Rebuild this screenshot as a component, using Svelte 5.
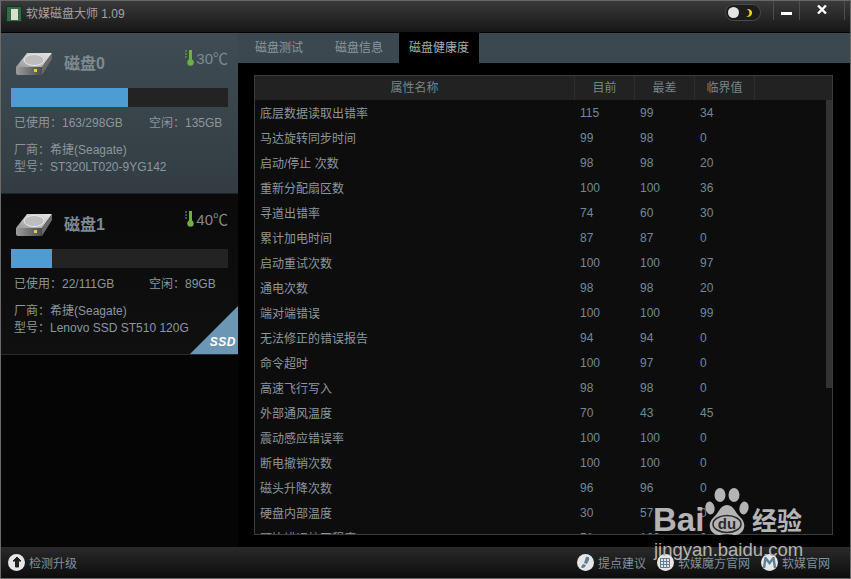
<script>
    const disks = [
        { name: '磁盘0', temp: '30℃', pct: 54, used: '163/298GB', free: '135GB', model: 'ST320LT020-9YG142', active: true },
        { name: '磁盘1', temp: '40℃', pct: 19, used: '22/111GB', free: '89GB', model: 'Lenovo SSD ST510 120G', ssd: true }
    ];

    const tabs = ['磁盘测试', '磁盘信息', '磁盘健康度'];

    const rows = [
        ['底层数据读取出错率', 115, 99, 34],
        ['马达旋转同步时间', 99, 98, 0],
        ['启动/停止 次数', 98, 98, 20],
        ['重新分配扇区数', 100, 100, 36],
        ['寻道出错率', 74, 60, 30],
        ['累计加电时间', 87, 87, 0],
        ['启动重试次数', 100, 100, 97],
        ['通电次数', 98, 98, 20],
        ['端对端错误', 100, 100, 99],
        ['无法修正的错误报告', 94, 94, 0],
        ['命令超时', 100, 97, 0],
        ['高速飞行写入', 98, 98, 0],
        ['外部通风温度', 70, 43, 45],
        ['震动感应错误率', 100, 100, 0],
        ['断电撤销次数', 100, 100, 0],
        ['磁头升降次数', 96, 96, 0],
        ['硬盘内部温度', 30, 57, 0],
        ['预比错误校正程度', 51, 100, 0]
    ];
</script>

<div class="window">
    <header class="titlebar">
        <div class="logo"><span></span></div>
        <div class="title">软媒磁盘大师 1.09</div>
        <div class="theme">
            <span class="knob"></span>
            <svg width="8" height="10" viewBox="0 0 10 12"><path d="M2 1 C7 0 10 4 8.500 7.500 C7.500 10 4.500 11.500 1.500 10.500 C4.500 10 5.500 8 5.500 6 C5.500 4 4.500 2 2 1Z" fill="#f2cf1c" /></svg>
        </div>
        <div class="winbtn"><span class="minus"></span></div>
        <div class="winbtn close">
            <svg width="10" height="9" viewBox="0 0 10 9"><path d="M1 0.500 L9 8.500 M9 0.500 L1 8.500" stroke="#fff" stroke-width="2.400" /></svg>
        </div>
    </header>

    <div class="body">
        <aside class="sidebar">
            {#each disks as disk}
                <section class="disk" class:active={disk.active}>
                    <div class="disk-head">
                        <svg class="hdd" width="38" height="23" viewBox="0 0 38 23">
                            <defs>
                                <linearGradient id="hddtop" x1="0" y1="1" x2="1" y2="0">
                                    <stop offset="0" stop-color="#9a9a9a" />
                                    <stop offset="1" stop-color="#e8e8e8" />
                                </linearGradient>
                                <linearGradient id="hddfront" x1="0" y1="0" x2="1" y2="0">
                                    <stop offset="0" stop-color="#9c9c9c" />
                                    <stop offset="1" stop-color="#4c4c4c" />
                                </linearGradient>
                            </defs>
                            <path d="M12 0 L37 0 L27 14 L1 14Z" fill="url(#hddtop)" />
                            <ellipse cx="19" cy="7" rx="10" ry="5.500" fill="#bdbdbd" stroke="#e6e6e6" />
                            <path d="M1 14 L27 14 L27 22 L3 22 Q1 22 1 20Z" fill="url(#hddfront)" />
                            <path d="M27 14 L37 0 L37 6 L27 22Z" fill="#6a6a6a" />
                            <rect x="19" y="16" width="3" height="3" fill="#d8cf4a" />
                        </svg>
                        <h2>{disk.name}</h2>
                        <div class="temp">
                            <svg width="10" height="16" viewBox="0 0 10 16">
                                <rect x="4" y="0" width="3" height="11" fill="#6fb043" />
                                <circle cx="5.500" cy="12.500" r="3.200" fill="#6fb043" />
                                <path d="M0 1h2M0 4h2M0 7h2" stroke="#6fb043" />
                            </svg>
                            <span>{disk.temp}</span>
                        </div>
                    </div>
                    <div class="bar"><div class="fill" style="width:{disk.pct}%"></div></div>
                    <div class="usage">
                        <span class="used">已使用：{disk.used}</span>
                        <span>空闲：{disk.free}</span>
                    </div>
                    <div class="vendor">厂商：希捷(Seagate)</div>
                    <div class="vendor">型号：{disk.model}</div>
                    {#if disk.ssd}
                        <div class="ssd"><span>SSD</span></div>
                    {/if}
                </section>
            {/each}
        </aside>

        <main class="main">
            <nav class="tabs">
                {#each tabs as tab, i}
                    <div class="tab" class:current={i === 2}>{tab}</div>
                {/each}
            </nav>
            <div class="table">
                <div class="thead">
                    <div class="cell name">属性名称</div>
                    <div class="cell num">目前</div>
                    <div class="cell num">最差</div>
                    <div class="cell num">临界值</div>
                </div>
                <div class="tbody">
                    {#each rows as row}
                        <div class="row">
                            <div class="col-name">{row[0]}</div>
                            <div class="col-num">{row[1]}</div>
                            <div class="col-num">{row[2]}</div>
                            <div class="col-num">{row[3]}</div>
                        </div>
                    {/each}
                    <div class="scrollbar"></div>
                </div>
            </div>
        </main>
    </div>

    <footer class="footer">
        <div class="link">
            <span class="round">
                <svg width="12" height="13" viewBox="0 0 12 13"><path d="M6 1 L10 5 L7.500 5 L7.500 11 L4.500 11 L4.500 5 L2 5Z" fill="#222" stroke="#222" /></svg>
            </span>
            检测升级
        </div>
        <div class="spacer"></div>
        <div class="link">
            <span class="round">
                <svg width="12" height="14" viewBox="0 0 12 14"><path d="M7 1 Q11 0 10 4 L8 8 L5 7Z M4 8 L7 9 L6 11 Q3 13 2 11Z" fill="#5d7f98" /></svg>
            </span>
            提点建议
        </div>
        <div class="link">
            <span class="round">
                <svg width="12" height="12" viewBox="0 0 12 12"><path d="M1.500 1.500h9v9h-9z M4.500 1.500v9 M7.500 1.500v9 M1.500 4.500h9 M1.500 7.500h9" fill="none" stroke="#5d7f98" /></svg>
            </span>
            软媒魔方官网
        </div>
        <div class="link">
            <span class="round">
                <svg width="13" height="12" viewBox="0 0 13 12"><path d="M1 11 L2.500 1 L6.500 6 L10.500 1 L12 11" fill="none" stroke="#5d7f98" stroke-width="2.400" /></svg>
            </span>
            软媒官网
        </div>
    </footer>

    <div class="watermark">
        <div class="wm-top">
            <span class="wm-bai">Bai</span>
            <svg class="paw" width="44" height="48" viewBox="0 0 44 48">
                <ellipse cx="5" cy="20" rx="4.500" ry="6.500" transform="rotate(-12 5 20)" />
                <ellipse cx="15" cy="7" rx="5.500" ry="7" />
                <ellipse cx="29" cy="7" rx="5.500" ry="7" />
                <ellipse cx="39" cy="20" rx="4.500" ry="6.500" transform="rotate(12 39 20)" />
                <path d="M22 17 C29 17 30 25 36 30 C43 37 38 48 29 47 Q22 45 15 47 C6 48 1 37 8 30 C14 25 15 17 22 17Z" />
                <ellipse cx="22" cy="36" rx="14" ry="8.500" fill="none" stroke="#2b2b2b" stroke-width="1.500" />
                <text x="22" y="41" text-anchor="middle" class="paw-text">du</text>
            </svg>
            <span class="wm-jy">经验</span>
        </div>
        <div class="wm-url">jingyan.baidu.com</div>
    </div>
</div>

<style>
    :global(body) {
        margin: 0;
        background: #000;
    }

    .window {
        position: relative;
        width: 851px;
        height: 579px;
        box-sizing: border-box;
        display: flex;
        flex-direction: column;
        overflow: hidden;
        background: #000;
        border-left: 1px solid #6a6a6a;
        border-right: 1px solid #6a6a6a;
        border-bottom: 1px solid #6a6a6a;
        font-family: "Liberation Sans", "Noto Sans CJK SC", sans-serif;
        font-size: 12px;
        color: #8f9ca3;
    }

    .titlebar {
        height: 32px;
        flex: none;
        display: flex;
        align-items: flex-start;
        box-sizing: border-box;
        border-top: 1px solid #666;
        background: linear-gradient(#3a3a3a, #161616);
    }

    .logo {
        width: 16px;
        height: 16px;
        margin: 5px 0 0 5px;
        box-sizing: border-box;
        background: #2f6b47;
        border: 1px solid #17331f;
        display: flex;
        justify-content: center;
        align-items: center;
    }

    .logo span {
        width: 7px;
        height: 11px;
        background: #d9ddd0;
    }

    .title {
        margin: 5px auto 0 4px;
        font-size: 12px;
        line-height: 17px;
        color: #a3a3a3;
    }

    .theme {
        width: 36px;
        height: 17px;
        margin: 3px 12px 0 0;
        display: flex;
        align-items: center;
        gap: 6px;
        padding-left: 2px;
        box-sizing: border-box;
        border: 1px solid #4a4a4a;
        border-radius: 9px;
        background: #1c1c1c;
    }

    .knob {
        width: 11px;
        height: 11px;
        border-radius: 50%;
        background: #e4e4e4;
    }

    .winbtn {
        width: 25px;
        height: 19px;
        display: flex;
        justify-content: center;
        align-items: center;
        border-left: 1px solid #4e4e4e;
    }

    .winbtn.close {
        width: 46px;
        border-right: 1px solid #4e4e4e;
        margin-right: 5px;
        padding-bottom: 3px;
        box-sizing: border-box;
    }

    .minus {
        width: 11px;
        height: 3px;
        margin-top: 6px;
        background: #fff;
    }

    .body {
        flex: 1;
        min-height: 0;
        display: flex;
        border-top: 1px solid #000;
    }

    .sidebar {
        width: 237px;
        flex: none;
        background: #050505;
    }

    .disk {
        position: relative;
        height: 161px;
        box-sizing: border-box;
        padding: 15px 10px 0;
        background: linear-gradient(#0a0a0a, #101010);
        border-bottom: 1px solid #2a2a2a;
        overflow: hidden;
    }

    .disk.active {
        background: linear-gradient(#3f4c53, #333c43);
        border-bottom: 1px solid #222;
    }

    .disk-head {
        height: 30px;
        display: flex;
        align-items: center;
        padding-left: 4px;
    }

    .hdd {
        flex: none;
        margin-top: 2px;
    }

    .disk h2 {
        margin: 2px 0 0 11px;
        font-size: 16px;
        font-weight: bold;
        line-height: 24px;
        color: #7e8a90;
    }

    .temp {
        margin: -11px 0 0 auto;
        display: flex;
        align-items: center;
        gap: 1px;
        font-size: 15px;
        color: #7e8a90;
    }

    .bar {
        height: 19px;
        margin: 10px 0 0;
        background: #232323;
        box-sizing: border-box;
    }

    .fill {
        height: 100%;
        background: #4d9cd4;
    }

    .usage {
        margin: 7px 0 0 3px;
        display: flex;
        line-height: 18px;
        font-size: 12px;
        color: #8b979d;
    }

    .used {
        width: 135px;
    }

    .vendor {
        margin-left: 3px;
        line-height: 17px;
        color: #8b979d;
    }

    .usage + .vendor {
        margin-top: 10px;
    }

    .ssd {
        position: absolute;
        right: 0;
        bottom: 0;
        width: 48px;
        height: 48px;
        background: #6c97b4;
        clip-path: polygon(100% 0, 100% 100%, 0 100%);
    }

    .ssd span {
        position: absolute;
        right: 2px;
        bottom: 5px;
        font-size: 12px;
        font-weight: bold;
        font-style: italic;
        letter-spacing: 0.5px;
        color: #fff;
    }

    .main {
        flex: 1;
        min-width: 0;
        display: flex;
        flex-direction: column;
    }

    .tabs {
        height: 30px;
        flex: none;
        display: flex;
        padding-left: 1px;
        background: #3c484f;
    }

    .tab {
        width: 80px;
        line-height: 30px;
        text-align: center;
        color: #8a979e;
    }

    .tab.current {
        background: #000;
        color: #a5adb1;
    }

    .table {
        margin: 12px 17px 0 16px;
        height: 460px;
        display: flex;
        flex-direction: column;
        box-sizing: border-box;
        border: 1px solid #3c3c3c;
        background: #0d0d0d;
    }

    .thead {
        height: 24px;
        flex: none;
        display: flex;
        background: #222;
    }

    .cell {
        padding-top: 1px;
        line-height: 23px;
        text-align: center;
        color: #77848b;
        border-right: 1px solid #2e2e2e;
        box-sizing: border-box;
    }

    .cell.name {
        width: 320px;
    }

    .cell.num {
        width: 60px;
    }

    .tbody {
        position: relative;
        flex: 1;
        min-height: 0;
        overflow: hidden;
    }

    .row {
        height: 25px;
        display: flex;
        align-items: center;
        color: #8b979d;
    }

    .col-name {
        width: 320px;
        padding-left: 5px;
        box-sizing: border-box;
    }

    .col-num {
        width: 60px;
        padding-left: 5px;
        box-sizing: border-box;
        color: #6f8a9c;
    }

    .scrollbar {
        position: absolute;
        right: 0;
        top: 0;
        width: 6px;
        height: 288px;
        background: #333;
    }

    .footer {
        height: 31px;
        flex: none;
        display: flex;
        align-items: center;
        box-sizing: border-box;
        padding: 0 20px 0 7px;
        gap: 11px;
        background: linear-gradient(#2a2a2a, #0c0c0c);
        color: #7f929f;
    }

    .spacer {
        flex: 1;
    }

    .link {
        display: flex;
        align-items: center;
        gap: 4px;
    }

    .round {
        width: 17px;
        height: 17px;
        border-radius: 50%;
        background: #e6e6e6;
        display: flex;
        justify-content: center;
        align-items: center;
    }

    .watermark {
        position: absolute;
        left: 652px;
        top: 488px;
        width: 155px;
        color: #b4b4b4;
        pointer-events: none;
    }

    .wm-top {
        display: flex;
        align-items: flex-end;
        height: 48px;
    }

    .wm-bai {
        font-weight: bold;
        font-size: 33px;
        line-height: 30px;
        width: 52px;
        margin-bottom: 1px;
    }

    .paw {
        fill: #b4b4b4;
        flex: none;
    }

    .paw-text {
        fill: #2b2b2b;
        font-size: 15px;
        font-weight: bold;
    }

    .wm-jy {
        font-size: 25px;
        line-height: 28px;
        font-weight: bold;
        margin: 0 0 1px 3px;
        white-space: nowrap;
    }

    .wm-url {
        font-size: 18.500px;
        line-height: 20px;
        margin: 4px 0 0 1px;
        white-space: nowrap;
    }
</style>
